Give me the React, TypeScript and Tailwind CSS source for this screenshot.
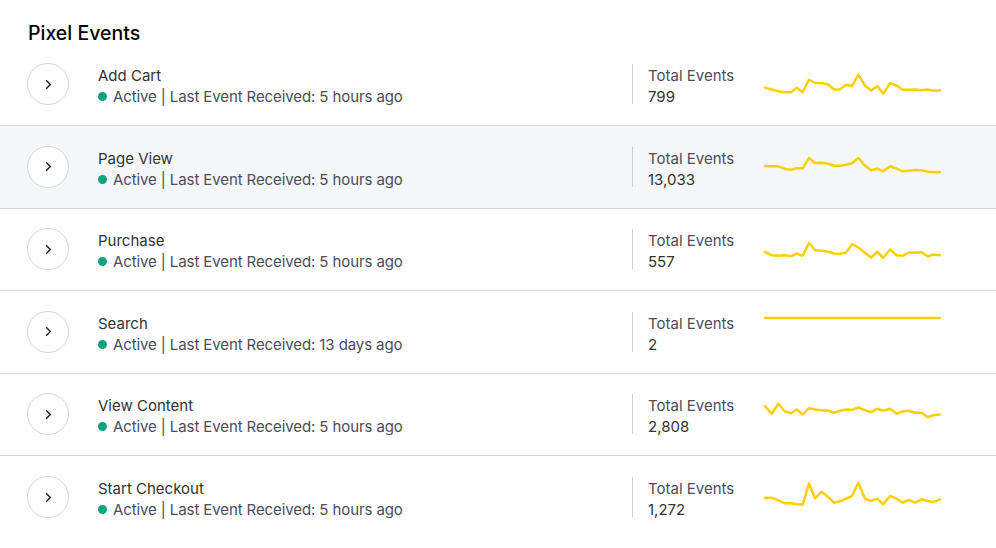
import { ChevronRight } from 'lucide-react'

type PixelEvent = {
  name: string
  last: string
  total: string
  offset: number
  points: number[]
}

const XS = [5, 11.7, 18.3, 25, 31, 36.7, 42.7, 49, 55, 61.7, 68.3, 74, 80, 86, 92, 98.3, 105, 111, 117.3, 123.3, 130, 136.7, 142.7, 149, 155, 161.7, 167.7, 173.3, 180]

const EVENTS: PixelEvent[] = [
  {
    name: 'Add Cart',
    last: '5 hours ago',
    total: '799',
    offset: 21.5,
    points: [22.3, 24, 25.7, 26.7, 26.7, 22.3, 26.7, 14, 17.3, 17.7, 19, 24, 24, 19.3, 20.7, 9, 20, 25, 20.7, 28.3, 17.7, 20, 24.3, 24.3, 24, 24.7, 24, 25.3, 25],
  },
  {
    name: 'Page View',
    last: '5 hours ago',
    total: '13,033',
    offset: 22,
    points: [18.3, 18.3, 18.3, 21, 21.7, 20.3, 20.3, 10, 15, 14.7, 15.7, 17.7, 17.7, 16.7, 15.3, 10, 17.7, 22.3, 20.7, 23.3, 18.3, 20.7, 23.3, 22.7, 22, 22.3, 23.7, 24.3, 24],
  },
  {
    name: 'Purchase',
    last: '5 hours ago',
    total: '557',
    offset: 24.5,
    points: [18.3, 21.7, 22.3, 21.7, 22.7, 20, 22.3, 9.3, 16.7, 17.3, 18.3, 20, 20.3, 19.3, 10.7, 14, 19.3, 24, 18.3, 24.3, 16, 21.7, 22.3, 19, 19.3, 18.7, 23, 21, 21.7],
  },
  {
    name: 'Search',
    last: '13 days ago',
    total: '2',
    offset: 0,
    points: Array(29).fill(27),
  },
  {
    name: 'View Content',
    last: '5 hours ago',
    total: '2,808',
    offset: 21.5,
    points: [10.7, 18.3, 8.3, 16, 17.7, 14, 19, 12.7, 14, 14.7, 15.3, 17.3, 15.3, 14, 14.3, 12, 14.7, 16.7, 13.3, 15.3, 13.3, 18.3, 16, 15.3, 17.3, 17.3, 21.7, 19.7, 19],
  },
  {
    name: 'Start Checkout',
    last: '5 hours ago',
    total: '1,272',
    offset: 20,
    points: [21.7, 21.7, 24.3, 27.3, 27.3, 28.3, 28.7, 7.3, 22.3, 15.7, 21, 26.7, 25.3, 22.7, 20, 6.7, 22.7, 25, 22.7, 28.3, 20, 22.7, 26.7, 24, 26.7, 23.3, 25, 26, 23.3],
  },
]

function Sparkline({ points, offset }: { points: number[]; offset: number }) {
  const d = points.map((y, i) => `${i === 0 ? 'M' : 'L'}${XS[i]} ${(y + offset).toFixed(1)}`).join(' ')
  return (
    <svg width="185" height="82" viewBox="0 0 185 82" className="shrink-0">
      <path d={d} fill="none" stroke="#fcd008" strokeWidth="2.5" strokeLinejoin="round" strokeLinecap="round" />
    </svg>
  )
}

export default function App() {
  return (
    <div className="w-[996px] h-[548px] bg-white text-[#333] font-['Inter',sans-serif] overflow-hidden">
      <div className="h-[43.5px] pl-[28px] pt-[20px]">
        <h2 className="text-[19.5px] leading-[26px] font-medium text-black">Pixel Events</h2>
      </div>

      {EVENTS.map((ev, i) => (
        <div
          key={ev.name}
          className={`h-[82.5px] flex items-center ${i < EVENTS.length - 1 ? 'border-b border-[#d3d5d9]' : ''} ${i === 1 ? 'bg-[#f6f7f9]' : ''}`}
        >
          <div className="ml-[27px] w-[42px] h-[42px] rounded-full border border-[#d6d6d6] bg-white flex items-center justify-center shrink-0">
            <ChevronRight size={15} strokeWidth={2.4} className="text-[#222]" />
          </div>

          <div className="ml-[29px] flex-1 min-w-0 pt-[4px]">
            <p className="text-[15px] leading-[21px] text-[#333]">{ev.name}</p>
            <p className="text-[15px] leading-[21px] text-[#4c4c5c] tracking-[-0.1px] flex items-center">
              <span className="w-[9px] h-[9px] rounded-full bg-[#0fa37f] mr-[6px] shrink-0" />
              Active | Last Event Received: {ev.last}
            </p>
          </div>

          <div className="w-[128px] h-[40px] border-l border-[#cfcfcf] pl-[15px] pt-[4px] flex flex-col justify-center shrink-0">
            <p className="text-[15px] leading-[21px] text-[#4c4c5c] whitespace-nowrap">Total Events</p>
            <p className="text-[15px] leading-[21px] text-[#333]">{ev.total}</p>
          </div>

          <div className="mr-[51px] self-stretch">
            <Sparkline points={ev.points} offset={ev.offset} />
          </div>
        </div>
      ))}
    </div>
  )
}
